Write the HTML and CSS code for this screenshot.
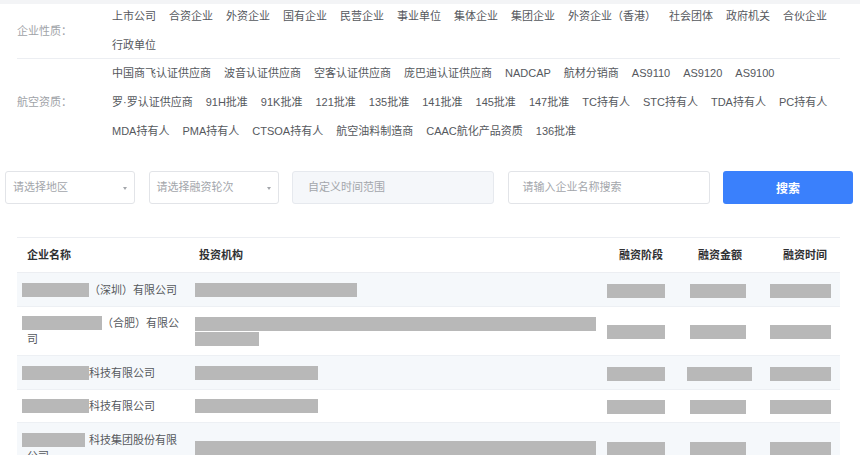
FILE: index.html
```
<!DOCTYPE html>
<html lang="zh-CN">
<head>
    <meta charset="UTF-8">
    <meta name="viewport" content="width=device-width, initial-scale=1.0">
    <title>融资事件</title>
    <link rel="stylesheet" href="styles.css">
</head>
<body>

    <div class="top-line"></div>

    <div class="filters">
        <div class="filter-row bordered">
            <div class="filter-label">企业性质：</div>
            <div class="filter-tags">
                <span class="tag">上市公司</span>
                <span class="tag">合资企业</span>
                <span class="tag">外资企业</span>
                <span class="tag">国有企业</span>
                <span class="tag">民营企业</span>
                <span class="tag">事业单位</span>
                <span class="tag">集体企业</span>
                <span class="tag">集团企业</span>
                <span class="tag">外资企业（香港）</span>
                <span class="tag">社会团体</span>
                <span class="tag">政府机关</span>
                <span class="tag">合伙企业</span>
                <span class="tag">行政单位</span>
            </div>
        </div>
        <div class="filter-row second">
            <div class="filter-label">航空资质：</div>
            <div class="filter-tags">
                <span class="tag">中国商飞认证供应商</span>
                <span class="tag">波音认证供应商</span>
                <span class="tag">空客认证供应商</span>
                <span class="tag">庞巴迪认证供应商</span>
                <span class="tag">NADCAP</span>
                <span class="tag">航材分销商</span>
                <span class="tag">AS9110</span>
                <span class="tag">AS9120</span>
                <span class="tag">AS9100</span>
                <span class="tag">罗·罗认证供应商</span>
                <span class="tag">91H批准</span>
                <span class="tag">91K批准</span>
                <span class="tag">121批准</span>
                <span class="tag">135批准</span>
                <span class="tag">141批准</span>
                <span class="tag">145批准</span>
                <span class="tag">147批准</span>
                <span class="tag">TC持有人</span>
                <span class="tag">STC持有人</span>
                <span class="tag">TDA持有人</span>
                <span class="tag">PC持有人</span>
                <span class="tag">MDA持有人</span>
                <span class="tag">PMA持有人</span>
                <span class="tag">CTSOA持有人</span>
                <span class="tag">航空油料制造商</span>
                <span class="tag">CAAC航化产品资质</span>
                <span class="tag">136批准</span>
            </div>
        </div>
    </div>

    <div class="toolbar">
        <div class="select">请选择地区<i class="caret"></i></div>
        <div class="select">请选择融资轮次<i class="caret"></i></div>
        <div class="date-range">自定义时间范围</div>
        <div class="search-input">请输入企业名称搜索</div>
        <button class="search-btn">搜索</button>
    </div>

    <table class="result-table">
        <colgroup>
            <col class="col-name">
            <col class="col-org">
            <col class="col-stage">
            <col class="col-amount">
            <col class="col-time">
        </colgroup>
        <thead>
            <tr>
                <th class="left">企业名称</th>
                <th class="left">投资机构</th>
                <th>融资阶段</th>
                <th>融资金额</th>
                <th class="time-head">融资时间</th>
            </tr>
        </thead>
        <tbody>
            <tr class="striped">
                <td class="name"><span class="mask m-name" style="width: 67px"></span>（深圳）有限公司</td>
                <td class="org"><span class="mask m-org" style="width: 162px"></span></td>
                <td><span class="mask m-stage"></span></td>
                <td><span class="mask m-amount"></span></td>
                <td><span class="mask m-time"></span></td>
            </tr>
            <tr>
                <td class="name"><span class="mask m-name" style="width: 80px"></span>（合肥）有限公司</td>
                <td class="org"><span class="mask m-org" style="width: 401px"></span><span class="mask m-org" style="width: 64px"></span></td>
                <td><span class="mask m-stage"></span></td>
                <td><span class="mask m-amount"></span></td>
                <td><span class="mask m-time"></span></td>
            </tr>
            <tr class="striped">
                <td class="name"><span class="mask m-name" style="width: 67px"></span>科技有限公司</td>
                <td class="org"><span class="mask m-org" style="width: 123px"></span></td>
                <td><span class="mask m-stage"></span></td>
                <td><span class="mask m-amount wide"></span></td>
                <td><span class="mask m-time"></span></td>
            </tr>
            <tr>
                <td class="name"><span class="mask m-name" style="width: 67px"></span>科技有限公司</td>
                <td class="org"><span class="mask m-org" style="width: 123px"></span></td>
                <td><span class="mask m-stage"></span></td>
                <td><span class="mask m-amount"></span></td>
                <td><span class="mask m-time"></span></td>
            </tr>
            <tr class="striped">
                <td class="name"><span class="mask m-name" style="width: 63px; margin-right: 4px"></span>科技集团股份有限公司</td>
                <td class="org"><span class="mask m-org" style="width: 401px"></span></td>
                <td><span class="mask m-stage"></span></td>
                <td><span class="mask m-amount"></span></td>
                <td><span class="mask m-time"></span></td>
            </tr>
        </tbody>
    </table>

</body>
</html>
```

FILE: styles.css
```
body {
    margin: 0;
    font-family: "Liberation Sans", "Noto Sans CJK SC", sans-serif;
    font-size: 11px;
    color: #606266;
    background: #fff;
}

.top-line {
    height: 4px;
    background: #f3f4f6;
}

.filters {
    margin: 0 20px 0 17px;
}

.filter-row {
    display: flex;
    align-items: center;
    padding: 4px 0 4px;
}

.filter-row.bordered {
    border-bottom: 1px solid #eceef2;
}

.filter-row.second {
    padding: 6px 0 6px;
}

.filter-label {
    width: 95px;
    flex-shrink: 0;
    color: #a0a3a8;
    line-height: 17px;
}

.filter-tags {
    flex: 1;
    display: flex;
    flex-wrap: wrap;
    column-gap: 13px;
    row-gap: 12px;
}

    .filter-tags .tag {
        line-height: 17px;
        white-space: nowrap;
        color: #55585d;
        cursor: pointer;
    }

.toolbar {
    display: grid;
    grid-template-columns: 130px 130px 202px 202px 130px;
    column-gap: 13.5px;
    margin-top: 25px;
    padding-left: 5px;
}

.select,
.date-range,
.search-input {
    position: relative;
    height: 33px;
    box-sizing: border-box;
    border: 1px solid #e2e4e8;
    border-radius: 3px;
    line-height: 31px;
    color: #a3a6ab;
}

.select {
    padding-left: 7px;
}

    .select .caret {
        position: absolute;
        right: 7px;
        top: 15px;
        width: 0;
        height: 0;
        border-left: 2.5px solid transparent;
        border-right: 2.5px solid transparent;
        border-top: 3px solid #a3a6ab;
    }

.date-range {
    padding-left: 15px;
    background: #f5f7fa;
    border-color: #e6e9ee;
}

.search-input {
    padding-left: 14px;
}

.search-btn {
    height: 33px;
    border: none;
    border-radius: 3px;
    background: #3a80fc;
    color: #fff;
    font-family: inherit;
    font-size: 12px;
    font-weight: bold;
    cursor: pointer;
}

.result-table {
    margin: 33px 0 0 17px;
    width: 823px;
    border-collapse: collapse;
    table-layout: fixed;
}

.col-name { width: 172px; }
.col-org { width: 414px; }
.col-stage { width: 76px; }
.col-amount { width: 82px; }
.col-time { width: 79px; }

.result-table th {
    height: 16px;
    padding: 9px 0;
    border-top: 1px solid #eceef2;
    border-bottom: 1px solid #eceef2;
    font-weight: bold;
    color: #303133;
    text-align: center;
    line-height: 16px;
}

    .result-table th.left {
        text-align: left;
        padding-left: 10px;
    }

    .result-table th.time-head {
        padding-left: 9px;
    }

.result-table td {
    padding: 8.5px 0 8px;
    border-bottom: 1px solid #edf0f4;
    line-height: 16px;
    text-align: center;
    vertical-align: middle;
    color: #55585d;
}

.result-table tr.striped td {
    background: #f5f8fb;
}

.result-table td.name {
    text-align: left;
    padding: 8.5px 5px 8px 10px;
}

.result-table td.org {
    text-align: left;
    padding: 8.5px 5px 8px 10px;
}

.mask {
    display: inline-block;
    height: 14px;
    background: #b8b8b8;
    vertical-align: -3px;
}

.m-name {
    margin-left: -5px;
}

.m-org {
    display: block;
    margin: 1px 0 1px -4px;
}

.m-stage {
    width: 58px;
    margin-right: 10px;
    vertical-align: middle;
}

.m-amount {
    width: 56px;
    margin-right: 4px;
    vertical-align: middle;
}

    .m-amount.wide {
        width: 65px;
        margin-right: 2px;
    }

.m-time {
    width: 61px;
    margin-right: 1px;
    vertical-align: middle;
}
```
